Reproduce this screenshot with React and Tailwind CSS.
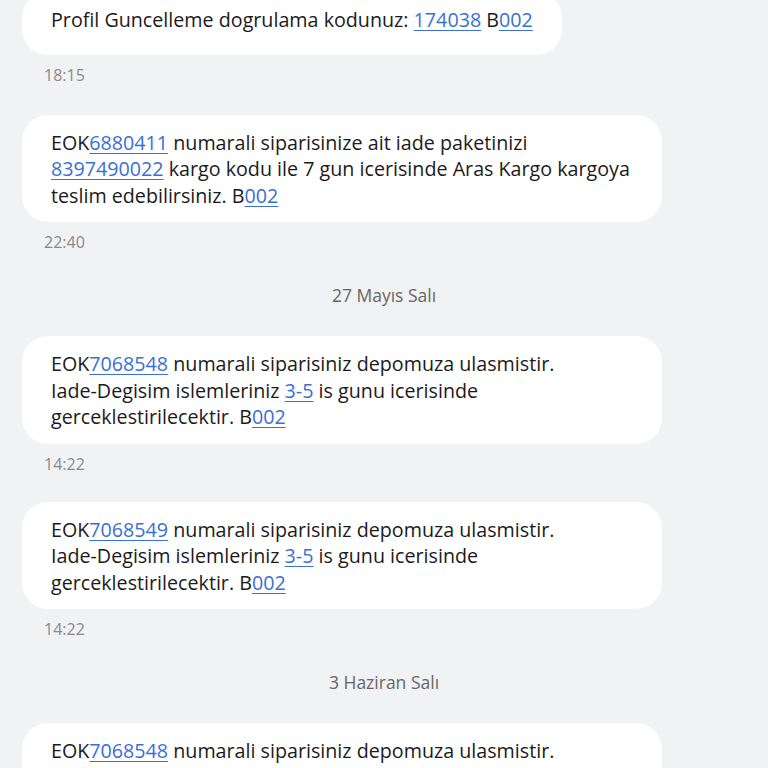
import React from "react";

const L = ({ children }) => (
  <span className="text-[#3a6fd6] underline decoration-1 underline-offset-[3px]">{children}</span>
);

const Bubble = ({ children, full = true, extra = "pb-[13px]" }) => (
  <div
    className={`ml-[22px] ${full ? "w-[640px]" : "w-fit"} rounded-[26px] bg-white pl-[29px] pr-[29px] pt-[15px] text-[19.7px] leading-[26.5px] text-[#1b1b1b] whitespace-nowrap ${extra}`}
  >
    {children}
  </div>
);

const Time = ({ t }) => (
  <div className="ml-[44px] mt-[10px] text-[16px] leading-[20px] text-[#8a8a8a]">{t}</div>
);

const DateH = ({ d }) => (
  <div className="mt-[32px] text-center text-[17.5px] leading-[22px] text-[#666666]">{d}</div>
);

export default function App() {
  return (
    <div
      className="w-[768px] h-[768px] overflow-hidden bg-[#f1f2f4] flex flex-col"
      style={{ fontFamily: "'Open Sans', 'Noto Sans', sans-serif" }}
    >
      <div className="-mt-[8px]">
        <Bubble full={false} extra="pb-[21px]">
          Profil Guncelleme dogrulama kodunuz: <L>174038</L> B<L>002</L>
        </Bubble>
      </div>
      <Time t="18:15" />
      <div className="mt-[30px]">
        <Bubble>
          EOK<L>6880411</L> numarali siparisinize ait iade paketinizi
          <br />
          <L>8397490022</L> kargo kodu ile 7 gun icerisinde Aras Kargo kargoya
          <br />
          teslim edebilirsiniz. B<L>002</L>
        </Bubble>
      </div>
      <Time t="22:40" />
      <DateH d="27 Mayıs Salı" />
      <div className="mt-[30px]">
        <Bubble>
          EOK<L>7068548</L> numarali siparisiniz depomuza ulasmistir.
          <br />
          Iade-Degisim islemleriniz <L>3-5</L> is gunu icerisinde
          <br />
          gerceklestirilecektir. B<L>002</L>
        </Bubble>
      </div>
      <Time t="14:22" />
      <div className="mt-[28px]">
        <Bubble>
          EOK<L>7068549</L> numarali siparisiniz depomuza ulasmistir.
          <br />
          Iade-Degisim islemleriniz <L>3-5</L> is gunu icerisinde
          <br />
          gerceklestirilecektir. B<L>002</L>
        </Bubble>
      </div>
      <Time t="14:22" />
      <DateH d="3 Haziran Salı" />
      <div className="mt-[30px]">
        <Bubble>
          EOK<L>7068548</L> numarali siparisiniz depomuza ulasmistir.
          <br />
          Iade-Degisim islemleriniz <L>3-5</L> is gunu icerisinde
          <br />
          gerceklestirilecektir. B<L>002</L>
        </Bubble>
      </div>
    </div>
  );
}
